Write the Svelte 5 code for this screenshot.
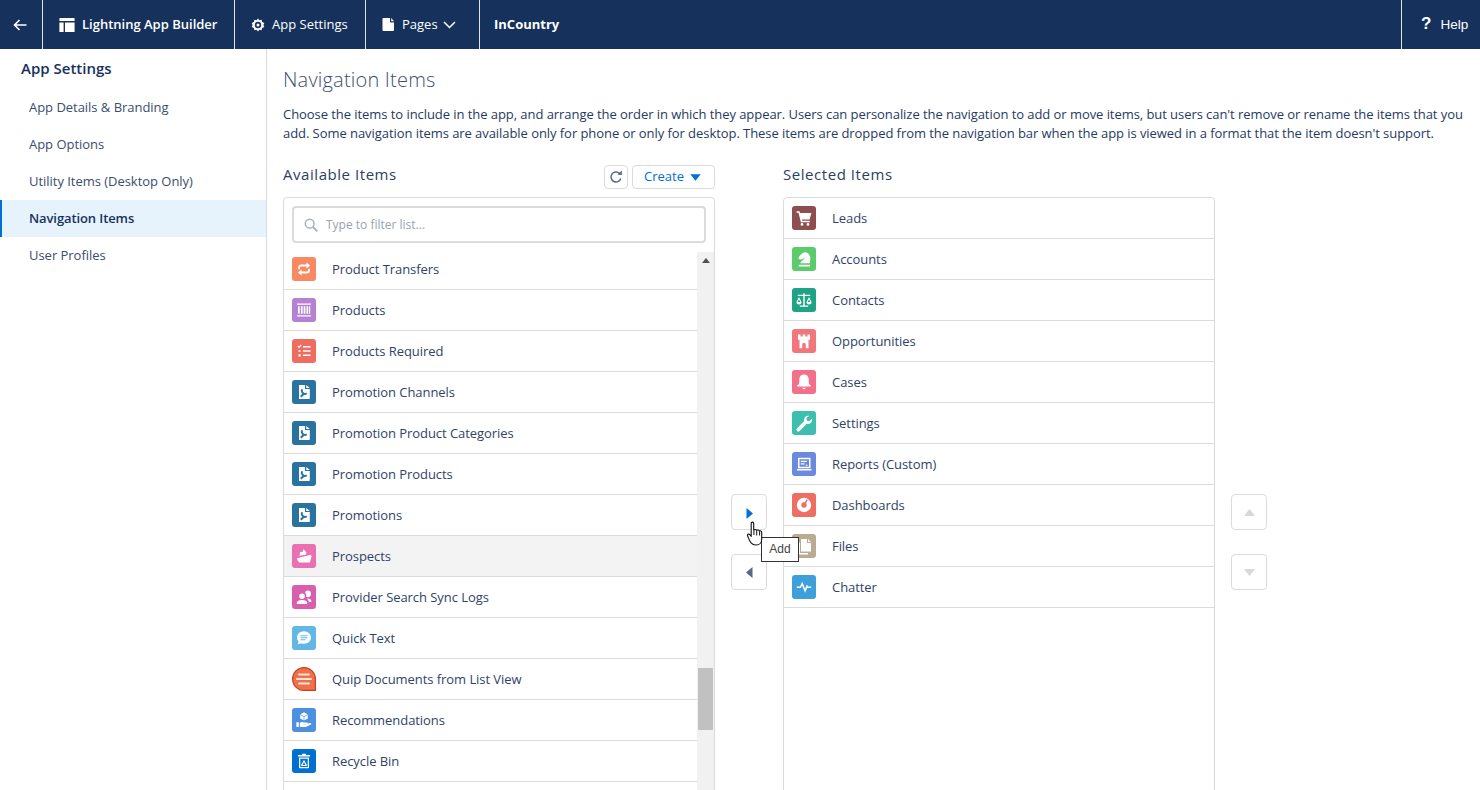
<script>
  const I = {
    transfer: [
      { d: 'M7 12.200v-1.700a2 2 0 0 1 2-2h6', w: 1.800 },
      { d: 'M17 11.800v1.700a2 2 0 0 1-2 2H9', w: 1.800 },
      { d: 'M14.500 5.600 18.200 8.500l-3.700 2.900z' },
      { d: 'M9.500 18.400 5.800 15.500l3.700-2.900z' }
    ],
    barcode: [
      { d: 'M5 5.500h14v1.300H5zM5 17.200h14v1.300H5zM6 8.300h1.700v7.400H6zM8.900 8.300h1.700v7.400H8.900zM11.700 8.300h1.700v7.400h-1.700zM14.500 8.300h1.700v7.400h-1.700zM17 8.300h1.200v7.400H17z' }
    ],
    checklist: [
      { d: 'M11 7h7.500v1.500H11zM11 11.300h7.500v1.500H11zM11 15.600h7.500v1.500H11zM6.500 15.200h2.200v2.200H6.500zM6.500 11.200h2.200v1.600H6.500z' },
      { d: 'M5.800 7.200l1.200 1.200 2.200-2.400', w: 1.200 }
    ],
    docwrench: [
      { d: 'M7 5h6v4h4.800v9.200a.8.800 0 0 1-.8.800H7z' },
      { d: 'M14.200 5l3.600 3h-3.600z' },
      { d: 'M8.800 16.800l3.700-3.800', w: 2, c: 1 },
      { d: 'M10.300 9.300a2.800 2.800 0 0 0 .5 3.700 2.800 2.800 0 0 0 3.900.2', w: 1.800, c: 1 }
    ],
    ship: [
      { d: 'M7.500 11.700 8 8.200l3-.7.500-2.500 3 3.500-.8 2.300zM5 14.200l13.800-3.500.8 1.500-1.700 6.300H7.300C6 17.300 5.200 15.800 5 14.200z' }
    ],
    people: [
      { d: 'M10 8.400a2.800 2.800 0 1 0 0 5.600 2.800 2.800 0 0 0 0-5.600zM4.800 19v-1.200c0-1.900 2.300-2.900 5.200-2.900s5.200 1 5.200 2.900V19zM15.600 5.400a2.500 2.500 0 0 0-2.500 2.400c.7.800 1.200 1.800 1.200 2.900 0 .4 0 .8-.2 1.100.4.300.9.500 1.500.5a3.400 3.400 0 0 0 0-6.900zM15.600 13.400c-.3 0-.6 0-.9.1 1.300.7 2.100 1.900 2.200 3.400h2.400v-1c0-1.600-1.600-2.500-3.700-2.500z' }
    ],
    bubble: [
      { d: 'M12 5.300c-3.900 0-7 2.800-7 6.300 0 1.500.6 2.800 1.600 3.900L5.800 18.400l3.100-1.200c1 .4 2 .6 3.100.6 3.900 0 7-2.800 7-6.200s-3.100-6.300-7-6.300zM8.500 9.200h7v1.100h-7zM8.500 11.200h7v1.100h-7zM8.500 13.200h5v1.100h-5z' }
    ],
    handbox: [
      { d: 'M12 4.300l3.800 2.100v4L12 12.600l-3.800-2.200v-4z' },
      { d: 'M8.200 6.500 12 8.600l3.800-2.100M12 8.600v4', w: 0.7, c: 1 },
      { d: 'M4.400 14.200h2.400v4.800H4.400zM7.800 14.700c1.800-1 3.200-.7 4.800-.1h2.700c.8 0 .8 1.400-.1 1.400h-2.600v.4l5.300-1.300c1.200-.3 1.900.8 1 1.300L13.800 18.900H7.800z' }
    ],
    trash: [
      { d: 'M10 4.800h4V6h4v1.400H6V6h4zM7 8.400h10v10a.8.800 0 0 1-.8.800H7.800a.8.800 0 0 1-.8-.8zM8.300 9.700v8.200h7.400V9.700zM12 10.800l-3 5.400.7.900h4.600l.7-.9zM12 13l1.300 2.900h-2.600z' }
    ],
    cart: [
      { d: 'M4.600 5.200h2.900l.5 1.800h11.400l-1.800 6.600H9.900l.3 1.200h7.500v1.500H8.900L6.500 6.800H4.600zM10 17a1.400 1.400 0 1 0 0 2.800 1.400 1.400 0 0 0 0-2.800zM16 17a1.400 1.400 0 1 0 0 2.800 1.400 1.400 0 0 0 0-2.800z' }
    ],
    knight: [
      { d: 'M6.300 11.500C7.500 8.500 10 5.500 13 5.200c3.500.2 5.300 3.300 5.300 6.300 0 1.700-.3 3.300-.6 4.700H8.400c.4-2.400 3.600-3.200 4.400-5.800-1.500 1.200-3.300 1.900-4.600 2.200z' },
      { d: 'M6.800 17.800h11.200v1.700H6.800z' }
    ],
    scales: [
      { d: 'M11.300 5.200h1.400v1.600h5.500v1.200h-5.500v9.500h3.500v1.300H7.800v-1.300h3.500V8H5.800V6.800h5.500z' },
      { d: 'M7 9l-2.600 5.200a2.600 2.200 0 0 0 5.200 0zM7 11.200l1.300 2.800H5.700zM17 9l-2.600 5.200a2.600 2.200 0 0 0 5.200 0zM17 11.200l1.300 2.800h-2.600z' }
    ],
    castle: [
      { d: 'M6 5.500h2.500v2h2.200v-2h2.600v2h2.200v-2H18v5.200h-1.500v8.600h-2.700v-3.800a1.800 1.800 0 0 0-3.600 0v3.800H7.500v-8.600H6z' }
    ],
    bell: [
      { d: 'M12 4.600c-2.700 0-4.700 2-4.700 4.700v2.900c0 1.600-1 2.700-2.200 3.400v1h13.800v-1c-1.200-.7-2.200-1.800-2.200-3.400V9.300c0-2.700-2-4.700-4.700-4.700zM10 17.800h4l-2 1.800z' }
    ],
    wrench: [
      { d: 'M17.300 4.800a4.300 4.300 0 0 0-5.200 5.400L5 17.300a1.800 1.800 0 0 0 2.600 2.600l7.100-7.100a4.300 4.300 0 0 0 5.400-5.200l-2.800 2.700-2.400-.6-.6-2.400z' }
    ],
    report: [
      { d: 'M6 5.800h12.500v10.400H6zM7.500 7.300v7.400h9.500V7.300zM8.800 8.800h6v1.200h-6zM8.800 11.200h3.800v1.200H8.800zM13.800 12.800h1.800v1h-1.800zM5 17h14.500v1.500H5z' }
    ],
    gauge: [
      { d: 'M12 4.800a7.200 7.200 0 1 0 0 14.400 7.200 7.200 0 0 0 0-14.400zM12 9.300a2.700 2.700 0 1 1 0 5.400 2.700 2.700 0 0 1 0-5.400z' },
      { d: 'M12.300 11.700l2.900-5', w: 1.500, c: 1 }
    ],
    file: [
      { d: 'M9 5h6v4h4v8.500H9zM16 5l3 3h-3zM5.500 8.500H8V19h8v1.500H5.500z' }
    ],
    pulse: [
      { d: 'M4.800 12.300h3.600l1.800-3.800 2.900 7.200 1.900-4.600 1 1.200h3.200', w: 1.500 }
    ]
  };

  const available = [
    ['Product Transfers', '#f88962', 'transfer'],
    ['Products', '#b781d3', 'barcode'],
    ['Products Required', '#ed6e60', 'checklist'],
    ['Promotion Channels', '#2a739e', 'docwrench'],
    ['Promotion Product Categories', '#2a739e', 'docwrench'],
    ['Promotion Products', '#2a739e', 'docwrench'],
    ['Promotions', '#2a739e', 'docwrench'],
    ['Prospects', '#ea70b1', 'ship'],
    ['Provider Search Sync Logs', '#d85fae', 'people'],
    ['Quick Text', '#62b7e5', 'bubble'],
    ['Quip Documents from List View', '', 'quip'],
    ['Recommendations', '#4e8fe0', 'handbox'],
    ['Recycle Bin', '#0070d2', 'trash'],
    ['', '', '']
  ];
  const selected = [
    ['Leads', '#8e4d4f', 'cart'],
    ['Accounts', '#5ccb6c', 'knight'],
    ['Contacts', '#1fa386', 'scales'],
    ['Opportunities', '#f2777d', 'castle'],
    ['Cases', '#f2708a', 'bell'],
    ['Settings', '#3cbfae', 'wrench'],
    ['Reports (Custom)', '#6b8ade', 'report'],
    ['Dashboards', '#ef6e64', 'gauge'],
    ['Files', '#baac93', 'file'],
    ['Chatter', '#3f9fd8', 'pulse']
  ];
  const nav = ['App Details & Branding', 'App Options', 'Utility Items (Desktop Only)', 'Navigation Items', 'User Profiles'];
</script>

{#snippet tile(color, key)}
  {#if key === 'quip'}
    <svg class="tile" viewBox="0 0 24 24">
      <path d="M12 .6a11.400 11.400 0 1 0 0 22.800h11.400V12A11.400 11.400 0 0 0 12 .6z" fill="#f0704a" stroke="#c9401c" stroke-width="1.200" />
      <path d="M7 7.500h10M4.800 12h14.400M7 16.500h10" stroke="#fde3da" stroke-width="1.800" stroke-linecap="round" fill="none" />
    </svg>
  {:else if key}
    <svg class="tile" viewBox="0 0 24 24">
      <rect width="24" height="24" rx="3" fill={color} />
      {#each I[key] as p}
        {#if p.w}
          <path d={p.d} fill="none" stroke={p.c ? color : '#fff'} stroke-width={p.w} />
        {:else}
          <path d={p.d} fill={p.c ? color : '#fff'} fill-rule="evenodd" />
        {/if}
      {/each}
    </svg>
  {/if}
{/snippet}

<div class="page">
  <header class="top">
    <button class="cell back" aria-label="Back">
      <svg width="14" height="14" viewBox="0 0 14 14"><path d="M13.500 7H1.500M6.500 2 1.500 7l5 5" fill="none" stroke="#fff" stroke-width="1.600" /></svg>
    </button>
    <div class="cell builder">
      <svg width="16" height="16" viewBox="0 0 16 16"><path d="M1 1h14a.6.6 0 0 1 .6.600V4H.4V1.600A.6.6 0 0 1 1 1zM.4 5.500h4.200V15H1a.6.6 0 0 1-.6-.600zM6 5.500h9.600v8.900a.6.6 0 0 1-.6.600H6z" fill="#fff" /></svg>
      <b>Lightning App Builder</b>
    </div>
    <div class="cell settings">
      <svg width="14" height="14" viewBox="0 0 14 14"><path d="M7 .5l1.400 1.800 2.200-.5.500 2.200 2.200.9-.9 2.100.9 2.100-2.200.9-.5 2.200-2.200-.5L7 13.500l-1.400-1.800-2.200.5-.5-2.200-2.200-.9.900-2.100-.9-2.100 2.200-.9.500-2.200 2.200.5zM7 3.800a3.200 3.200 0 1 0 0 6.400 3.200 3.200 0 0 0 0-6.400zM7 5.500a1.500 1.500 0 1 1 0 3 1.500 1.500 0 0 1 0-3z" fill="#fff" fill-rule="evenodd" /></svg>
      <span>App Settings</span>
    </div>
    <div class="cell pages">
      <svg width="13" height="15" viewBox="0 0 13 15"><path d="M1.500 1H8v3.500a1 1 0 0 0 1 1h3V13a1 1 0 0 1-1 1H1.500a1 1 0 0 1-1-1V2a1 1 0 0 1 1-1zM9.200 1l2.800 3.200H9.200z" fill="#fff" /></svg>
      <span>Pages</span>
      <svg class="chev" width="13" height="8" viewBox="0 0 13 8"><path d="M1 1l5.500 5.500L12 1" fill="none" stroke="#fff" stroke-width="1.500" /></svg>
    </div>
    <div class="cell app"><b>InCountry</b></div>
    <div class="fill"></div>
    <div class="help"><span class="q">?</span><span>Help</span></div>
  </header>

  <div class="body">
    <aside class="side">
      <h2>App Settings</h2>
      {#each nav as n, i}
        <div class="navitem" class:active={i === 3}>{n}</div>
      {/each}
    </aside>

    <main class="main">
      <h1>Navigation Items</h1>
      <p>Choose the items to include in the app, and arrange the order in which they appear. Users can personalize the navigation to add or move items, but users can't remove or rename the items that you add. Some navigation items are available only for phone or only for desktop. These items are dropped from the navigation bar when the app is viewed in a format that the item doesn't support.</p>

      <div class="columns">
        <section class="col">
          <div class="colhead">
            <h3>Available Items</h3>
            <button class="btn icon" aria-label="Refresh">
              <svg width="14" height="14" viewBox="0 0 14 14"><path d="M11.800 8.500A5 5 0 1 1 10.400 3.300" fill="none" stroke="#54698d" stroke-width="1.500" /><path d="M8.300 4.800 12.800 5V.6z" fill="#54698d" /></svg>
            </button>
            <button class="btn create"><span>Create</span>
              <svg width="11" height="7" viewBox="0 0 11 7"><path d="M.3.300h10.400L5.500 6.700z" fill="#0070d2" /></svg>
            </button>
          </div>
          <div class="box">
            <div class="filter">
              <div class="input">
                <svg width="14" height="14" viewBox="0 0 14 14"><circle cx="5.700" cy="5.700" r="4.400" fill="none" stroke="#a8b0bd" stroke-width="1.500" /><path d="M9 9l4.300 4.300" stroke="#a8b0bd" stroke-width="1.800" /></svg>
                <span>Type to filter list...</span>
              </div>
            </div>
            <div class="scroller">
              <div class="rows clip">
                {#each available as [name, color, key]}
                  <div class="row" class:hover={name === 'Prospects'}>
                    {@render tile(color, key)}
                    <span>{name}</span>
                  </div>
                {/each}
              </div>
              <div class="bar">
                <svg class="up" width="8" height="5" viewBox="0 0 8 5"><path d="M4 0l4 5H0z" fill="#505050" /></svg>
                <div class="thumb"></div>
              </div>
            </div>
          </div>
        </section>

        <div class="movers">
          <button class="btn sq add" aria-label="Add"><svg width="7" height="11" viewBox="0 0 7 11"><path d="M.5 0 7 5.500.5 11z" fill="#0070d2" /></svg></button>
          <button class="btn sq" aria-label="Remove"><svg width="7" height="11" viewBox="0 0 7 11"><path d="M6.500 0 0 5.500 6.500 11z" fill="#54698d" /></svg></button>
        </div>

        <section class="col">
          <div class="colhead"><h3>Selected Items</h3></div>
          <div class="box">
            <div class="rows">
              {#each selected as [name, color, key]}
                <div class="row">
                  {@render tile(color, key)}
                  <span>{name}</span>
                </div>
              {/each}
            </div>
          </div>
        </section>

        <div class="movers">
          <button class="btn sq" aria-label="Up"><svg width="11" height="7" viewBox="0 0 11 7"><path d="M5.500 0 11 7H0z" fill="#d8d8d8" /></svg></button>
          <button class="btn sq" aria-label="Down"><svg width="11" height="7" viewBox="0 0 11 7"><path d="M0 0h11L5.500 7z" fill="#d8d8d8" /></svg></button>
        </div>
      </div>
    </main>
  </div>

  <div class="tooltip">Add</div>
  <svg class="hand" width="18" height="26" viewBox="0 0 18 26">
    <path d="M4.200 2.200c0-1.500 2.500-1.500 2.500 0v6.600c1.500-.6 2.500-.3 2.900.4 1.100-.5 2.300-.1 2.600.7 1.200-.4 2.500.2 2.500 1.500v6.800c0 3-1.900 5.800-5.600 5.800-3 0-4.800-1.100-6-3.400L.6 15c-.7-1.400 1.200-2.600 2.200-1.300l1.400 1.700z" fill="#fff" stroke="#111" stroke-width="1.100" stroke-linejoin="round" />
    <path d="M6.900 9v5M9.700 9.500v5M12.600 10.200v4.300" stroke="#111" stroke-width="1" fill="none" />
  </svg>
</div>

<style>
  :global(body) { margin: 0; background: #fff; }
  .page {
    position: relative;
    width: 1480px;
    height: 790px;
    overflow: hidden;
    font-family: "Open Sans", "Liberation Sans", sans-serif;
    font-size: 13px;
    color: #16325c;
    display: flex;
    flex-direction: column;
  }
  button { font: inherit; background: none; border: 0; padding: 0; margin: 0; }

  .top { flex: 0 0 49px; height: 49px; background: #16325c; color: #fff; display: flex; }
  .cell { display: flex; align-items: center; border-right: 1px solid #dfe3ea; box-sizing: border-box; height: 49px; font-size: 13px; padding-bottom: 2px; }
  .cell b { font-weight: 600; }
  .cell svg { position: relative; top: 1px; }
  .back { width: 43px; justify-content: center; padding-right: 3px; }
  .builder { width: 192px; padding-left: 16px; gap: 7px; }
  .settings { width: 131px; padding-left: 16px; gap: 7px; }
  .pages { width: 114px; padding-left: 16px; gap: 7px; }
  .pages .chev { margin-left: -2px; }
  .app { border: 0; padding-left: 14px; }
  .app b { font-weight: 700; }
  .fill { flex: 1; }
  .help { width: 79px; box-sizing: border-box; border-left: 1px solid #dfe3ea; display: flex; align-items: center; gap: 9px; padding: 0 0 1px 19px; font-family: "Liberation Sans", sans-serif; font-size: 13.500px; }
  .q { font-weight: 700; font-size: 17px; }

  .body { flex: 1; display: flex; min-height: 0; }
  .side { width: 267px; flex: none; box-sizing: border-box; border-right: 1px solid #dddbda; }
  .side h2 { margin: 0; padding: 9px 0 0 21px; height: 40px; box-sizing: border-box; line-height: 21px; font-size: 15px; font-weight: 600; }
  .navitem { height: 37px; line-height: 37px; padding-left: 29px; box-sizing: border-box; color: #3a4d6e; font-size: 13px; letter-spacing: -0.03px; }
  .navitem.active { background: #e7f3fc; border-left: 2px solid #0070d2; padding-left: 27px; color: #16325c; font-weight: 600; letter-spacing: -0.1px; }

  .main { flex: 1; padding-left: 16px; min-width: 0; }
  h1 { margin: 0; padding-top: 18px; height: 56px; box-sizing: border-box; font-size: 20px; line-height: 26px; font-weight: 300; letter-spacing: 0.2px; color: #3d4f6e; }
  p { margin: 0; width: 1190px; font-size: 13px; line-height: 19px; letter-spacing: -0.06px; color: #1f3a63; height: 60px; }

  .columns { display: flex; gap: 16px; align-items: flex-start; }
  .col { width: 432px; flex: none; }
  .colhead { height: 32px; display: flex; gap: 4px; align-items: flex-start; }
  h3 { margin: 0; flex: 1; font-size: 15px; font-weight: 400; line-height: 19px; letter-spacing: 0.55px; color: #2a3f63; }
  .btn { box-sizing: border-box; border: 1px solid #dddbda; border-radius: 4px; background: #fff; display: flex; align-items: center; justify-content: center; }
  .icon { width: 24px; height: 24px; }
  .create { width: 83px; height: 24px; color: #0070d2; gap: 6px; font-size: 13px; padding: 0 2px 2px 0; }
  .create svg { position: relative; top: 1px; }

  .box { height: 640px; box-sizing: border-box; border: 1px solid #dddbda; border-radius: 4px 4px 0 0; }
  .filter { padding: 8px 8px 0 8px; height: 54px; box-sizing: border-box; }
  .input { height: 37px; box-sizing: border-box; border: 2px solid #dddbda; border-radius: 4px; display: flex; align-items: center; gap: 8px; padding-left: 10px; color: #9aa3b2; font-size: 12px; }
  .scroller { display: flex; height: 600px; overflow: hidden; }
  .rows { flex: 1; min-width: 0; }
  .rows.clip { margin-top: -3px; }
  .row { height: 41px; box-sizing: border-box; border-bottom: 1px solid #dddbda; display: flex; align-items: center; gap: 16px; padding-left: 8px; color: #2f4368; letter-spacing: -0.06px; }
  .row.hover { background: #f3f3f3; }
  .tile { width: 24px; height: 24px; flex: none; }
  .bar { width: 17px; flex: none; background: #f1f1f1; position: relative; }
  .up { position: absolute; left: 5px; top: 6px; }
  .thumb { position: absolute; left: 1px; right: 1px; top: 416px; height: 62px; background: #c1c1c1; }

  .movers { width: 36px; flex: none; padding-top: 329px; display: flex; flex-direction: column; gap: 24px; }
  .sq { width: 36px; height: 36px; }
  .add { padding-top: 2px; }

  .tooltip { position: absolute; left: 761px; top: 537px; width: 38px; height: 25px; box-sizing: border-box; border: 1px solid #333; background: #fff; color: #444; display: flex; align-items: center; justify-content: center; padding-bottom: 2px; font-family: "Liberation Sans", sans-serif; font-size: 12px; }
  .hand { position: absolute; left: 747px; top: 521px; }
</style>
